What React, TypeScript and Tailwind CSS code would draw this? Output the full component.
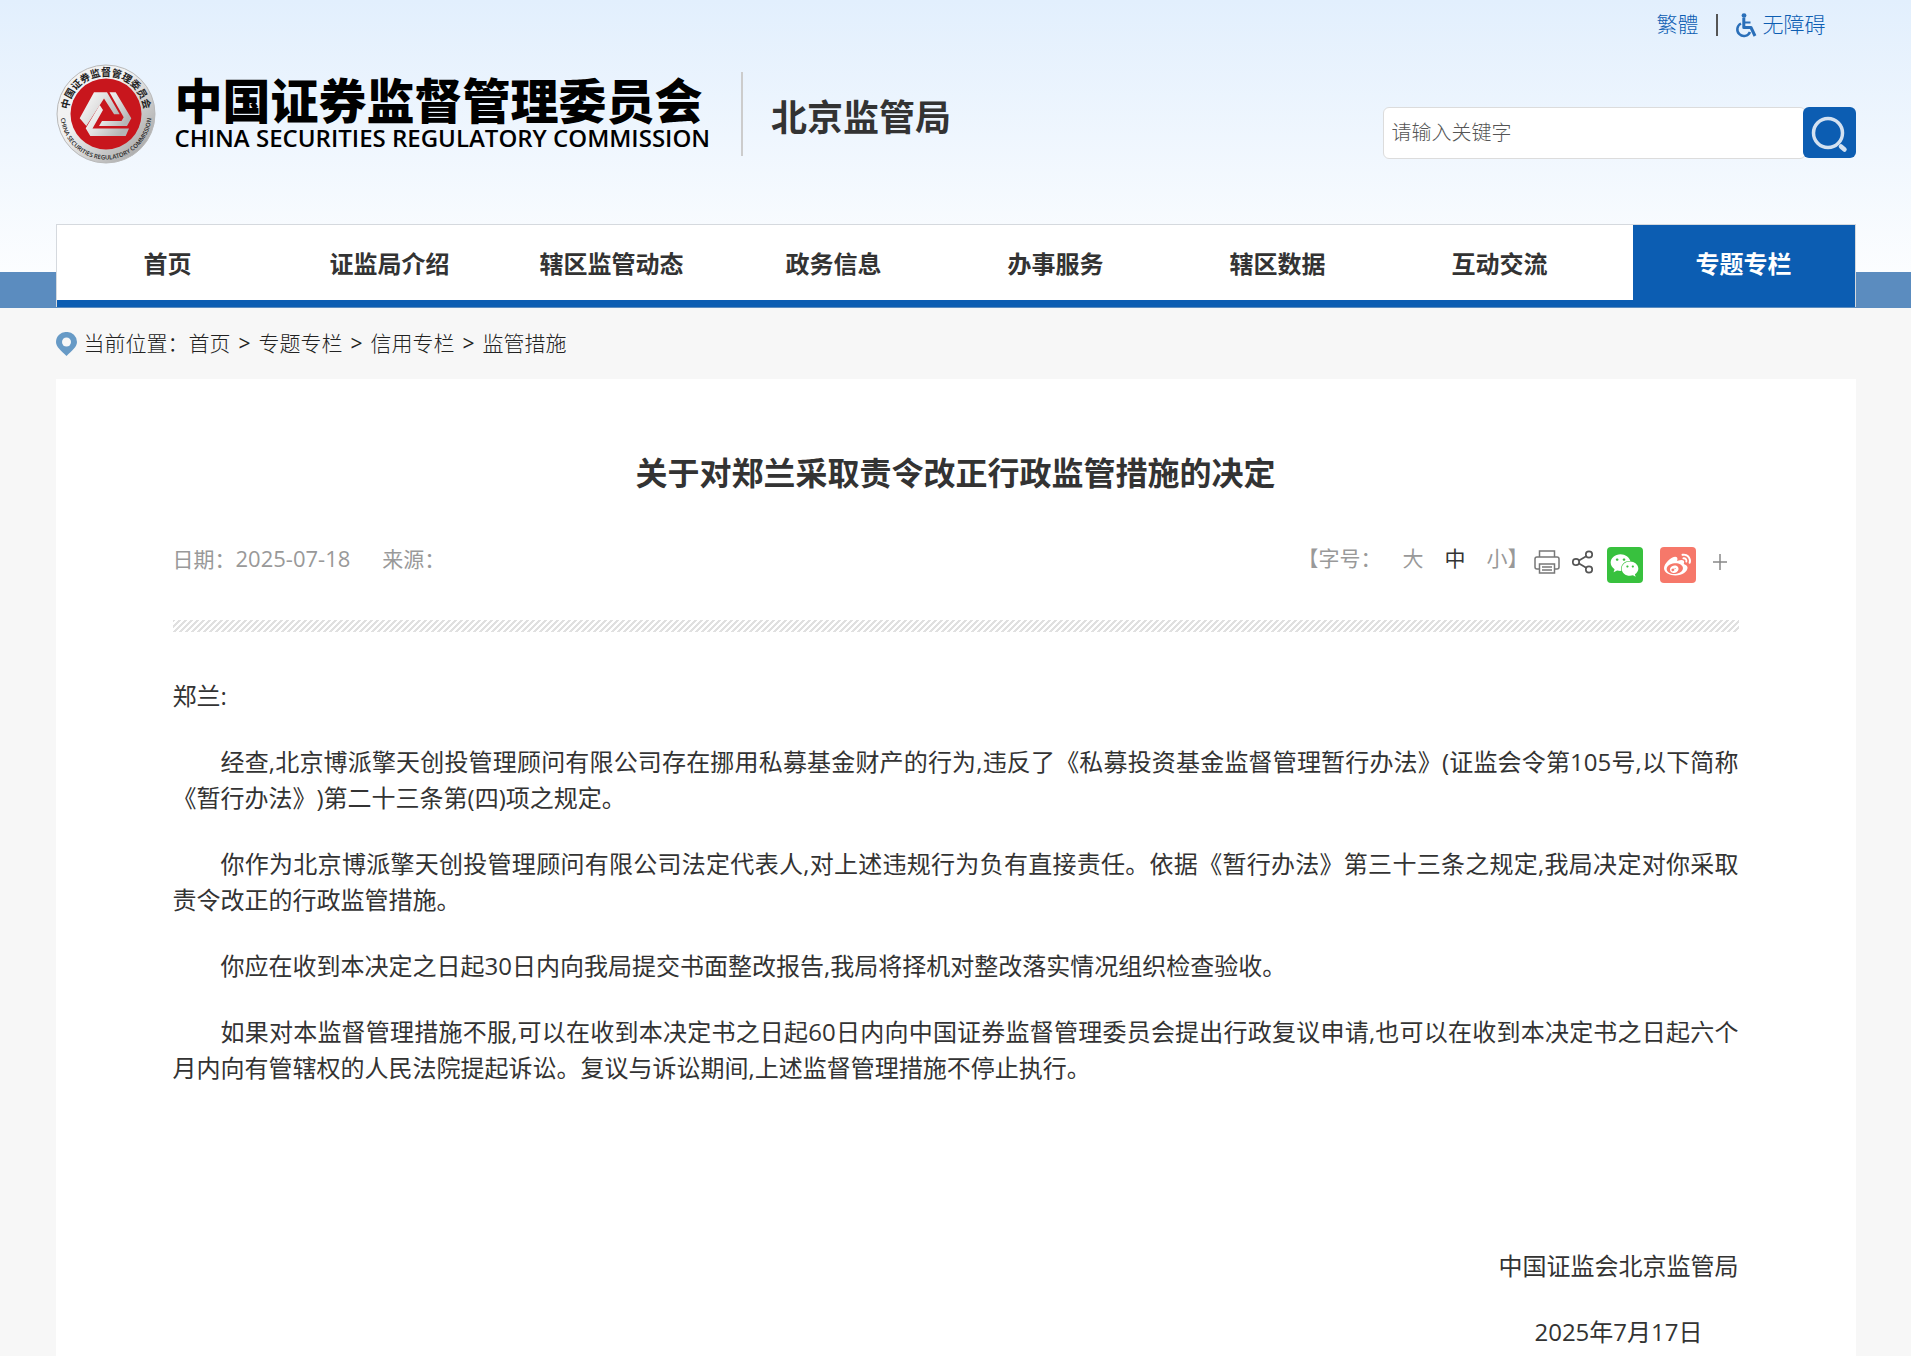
import { FormEvent, useState } from 'react';
import { FaWeibo, FaWeixin } from 'react-icons/fa';

interface INavItem {
  label: string;
  active?: boolean;
}

const navItems: INavItem[] = [
  { label: '首页' },
  { label: '证监局介绍' },
  { label: '辖区监管动态' },
  { label: '政务信息' },
  { label: '办事服务' },
  { label: '辖区数据' },
  { label: '互动交流' },
  { label: '专题专栏', active: true },
];

const crumbs = ['首页', '专题专栏', '信用专栏', '监管措施'];

const paragraphs = [
  '经查,北京博派擎天创投管理顾问有限公司存在挪用私募基金财产的行为,违反了《私募投资基金监督管理暂行办法》(证监会令第105号,以下简称《暂行办法》)第二十三条第(四)项之规定。',
  '你作为北京博派擎天创投管理顾问有限公司法定代表人,对上述违规行为负有直接责任。依据《暂行办法》第三十三条之规定,我局决定对你采取责令改正的行政监管措施。',
  '你应在收到本决定之日起30日内向我局提交书面整改报告,我局将择机对整改落实情况组织检查验收。',
  '如果对本监督管理措施不服,可以在收到本决定书之日起60日内向中国证券监督管理委员会提出行政复议申请,也可以在收到本决定书之日起六个月内向有管辖权的人民法院提起诉讼。复议与诉讼期间,上述监督管理措施不停止执行。',
];

const fontSizes = ['大', '中', '小'];

const Emblem = () => (
  <svg width="100" height="100" viewBox="0 0 100 100" aria-hidden="true">
    <defs>
      <linearGradient id="ring" x1="0" y1="0" x2="1" y2="1">
        <stop offset="0" stopColor="#f4f4f4" />
        <stop offset="0.4" stopColor="#f1f1f1" />
        <stop offset="0.75" stopColor="#bdbdbd" />
        <stop offset="1" stopColor="#9a9a9a" />
      </linearGradient>
      <linearGradient id="knot" x1="0" y1="0" x2="1" y2="0.6">
        <stop offset="0" stopColor="#ffffff" />
        <stop offset="0.5" stopColor="#e2e2e2" />
        <stop offset="1" stopColor="#b5b5b5" />
      </linearGradient>
      <path id="arcTop" d="M12 50a38 38 0 0 1 76 0" />
      <path id="arcBottom" d="M4.500 50a45.500 45.500 0 0 0 91 0" />
    </defs>
    <circle cx="50" cy="50" r="49" fill="url(#ring)" stroke="#b9b9b9" />
    <circle cx="50" cy="50" r="35.500" fill="#c8161d" />
    <g fill="url(#knot)">
      <path d="M23.700 54.300L38 28.300h13l12.700 22h-5.600L48 34.500 30.300 62z" />
      <path d="M53.500 28.300h6.200l15.600 26L71 62H43l3-5h19.500l2.200-3.700z" />
      <path d="M69.700 72H34.300l-4.600-7.700L43.700 41l3.300 5-10.500 18.500H73z" />
    </g>
    <text
      fontSize="10"
      fontWeight="700"
      fill="#222"
      textAnchor="middle"
      className="font-['Noto_Sans_CJK_SC',sans-serif]"
    >
      <textPath href="#arcTop" startOffset="50%">
        中国证券监督管理委员会
      </textPath>
    </text>
    <text
      fontSize="6"
      fontWeight="600"
      fill="#222"
      textAnchor="middle"
      className="font-['Open_Sans',sans-serif]"
    >
      <textPath href="#arcBottom" startOffset="50%">
        CHINA SECURITIES REGULATORY COMMISSION
      </textPath>
    </text>
  </svg>
);

const WheelchairIcon = () => (
  <svg width="22" height="25" viewBox="0 0 22 25" fill="none" stroke="#2a6fb9" aria-hidden="true">
    <circle cx="9" cy="2.6" r="2.4" fill="#2a6fb9" stroke="none" />
    <path d="M8.800 5v9.500h7.200l4 8.500" strokeWidth="3" strokeLinejoin="round" />
    <path d="M9.500 9.500h6" strokeWidth="2" />
    <path d="M6 10.500a6.600 6.600 0 1 0 9 8.500" strokeWidth="2.5" />
  </svg>
);

const SearchIcon = () => (
  <svg width="37" height="37" viewBox="0 0 37 37" fill="none" stroke="#d3e1f1" aria-hidden="true">
    <circle cx="17" cy="17" r="14.5" strokeWidth="3.5" />
    <path d="M30 30.500l3.500 3" strokeWidth="4.5" strokeLinecap="round" />
  </svg>
);

const PinIcon = () => (
  <svg width="21" height="24" viewBox="0 0 21 24" aria-hidden="true">
    <path
      d="M10.5 0a10 10 0 0 1 10.5 10c0 5-5 8.500-10.500 14C5 18.500 0 15 0 10A10 10 0 0 1 10.5 0z"
      fill="#679ac6"
    />
    <circle cx="10.5" cy="10" r="4.5" fill="#f7f7f7" />
  </svg>
);

const PrintIcon = () => (
  <svg width="26" height="24" viewBox="0 0 26 24" fill="none" stroke="#777" strokeWidth="1.5" aria-hidden="true">
    <path d="M5.500 7V1h15v6" />
    <path d="M5.500 19H3a2 2 0 0 1-2-2V9a2 2 0 0 1 2-2h20a2 2 0 0 1 2 2v8a2 2 0 0 1-2 2h-2.500" />
    <path d="M5.500 14h15v9h-15z" />
    <path d="M8 17h10M8 20h10" />
  </svg>
);

const ShareIcon = () => (
  <svg width="21" height="24" viewBox="0 0 21 24" fill="none" stroke="#555" strokeWidth="1.7" aria-hidden="true">
    <circle cx="4" cy="12" r="3.2" />
    <circle cx="17" cy="4.5" r="3.2" />
    <circle cx="17" cy="19.5" r="3.2" />
    <path d="M7 10.500l7.200-4.300M7 13.500l7.200 4.300" />
  </svg>
);

const Header = () => {
  const [keyword, setKeyword] = useState<string>('');

  const handleSearch = (e: FormEvent<HTMLFormElement>) => {
    e.preventDefault();
  };

  return (
    <header className="bg-linear-to-b from-[#e2effd] to-white">
      <div className="mx-auto max-w-[1800px]">
        <div className="flex h-[50px] items-center justify-end pr-[30px] text-[21px] font-light text-[#0c5db2]">
          <a href="#">繁體</a>
          <span className="mx-[17px] h-[22px] w-[2px] bg-[#555]" />
          <a href="#" className="flex items-center gap-[6px]">
            <WheelchairIcon />
            无障碍
          </a>
        </div>
        <div className="flex h-[174px] items-start justify-between">
          <div className="flex items-center pt-[14px]">
            <a href="#" className="flex items-center gap-[19px] text-black">
              <Emblem />
              <span className="flex flex-col">
                <span className="text-[48px] leading-[48px] font-black">中国证券监督管理委员会</span>
                <span className="text-[24px] leading-[26px] font-semibold">
                  CHINA SECURITIES REGULATORY COMMISSION
                </span>
              </span>
            </a>
            <span className="mr-[28px] ml-[31px] h-[84px] w-[2px] bg-[#ccc]" />
            <span className="pt-[8px] text-[36px] font-bold">北京监管局</span>
          </div>
          <form onSubmit={handleSearch} className="flex pt-[57px]">
            <input
              type="text"
              aria-label="请输入关键字"
              value={keyword}
              onChange={(e) => setKeyword(e.target.value)}
              placeholder="请输入关键字"
              className="-mr-[3px] h-[52px] w-[423px] rounded-[6px] border border-[#dcdcdc] bg-white px-[8px] pb-[2px] text-[20px] font-light outline-none placeholder:text-[#555]"
            />
            <button
              type="submit"
              aria-label="搜索"
              className="relative flex h-[51px] w-[53px] items-center justify-center rounded-[6px] bg-[#0c5db2] pt-[4px]"
            >
              <SearchIcon />
            </button>
          </form>
        </div>
      </div>
      {/* nav */}
      <div className="bg-[linear-gradient(to_bottom,transparent_48px,#5b8cbf_48px)] pb-px">
        <nav className="mx-auto flex h-[83px] max-w-[1800px] border-x border-t border-[#d5d9de] bg-white text-[24px] font-bold">
          <ul className="flex flex-1 border-b-[7px] border-[#0c5db2]">
            {navItems.map((item) => (
              <li
                key={item.label}
                className={
                  item.active
                    ? 'ml-auto -mb-[7px] w-[222px] bg-[#0c5db2] text-white'
                    : 'w-[222px]'
                }
              >
                <a href="#" className="flex h-[78px] items-center justify-center">
                  {item.label}
                </a>
              </li>
            ))}
          </ul>
        </nav>
      </div>
      {/* nav */}
    </header>
  );
};

const Breadcrumb = () => (
  <nav className="flex h-[71px] items-center text-[21px] font-light text-[#222]">
    <PinIcon />
    <span className="ml-[7px]">当前位置：</span>
    {crumbs.map((crumb, index) => (
      <span key={crumb}>
        {index > 0 && <span className="mx-[8px] font-normal">&gt;</span>}
        <a href="#">{crumb}</a>
      </span>
    ))}
  </nav>
);

const ArticleMeta = () => {
  const [size, setSize] = useState<string>('中');

  return (
    <div className="flex justify-between text-[21px] leading-[30px] text-[#999]">
      <p>
        日期：<span className="text-[22px]">2025-07-18</span>
        <span className="ml-[32px]">来源：</span>
      </p>
      <div className="flex items-start">
        <span className="mr-[21px]">【字号：</span>
        <div className="flex gap-[21px]">
          {fontSizes.map((item) => (
            <button
              key={item}
              type="button"
              onClick={() => setSize(item)}
              className={item === size ? 'text-[#333]' : ''}
            >
              {item}
            </button>
          ))}
        </div>
        <span className="mr-[5px]">】</span>
        <div className="flex items-start pt-[4px]">
          <button type="button" aria-label="打印" className="mr-[12px] flex h-[30px] items-center">
            <PrintIcon />
          </button>
          <button type="button" aria-label="分享" className="mr-[14px] flex h-[30px] items-center">
            <ShareIcon />
          </button>
          <button
            type="button"
            aria-label="微信"
            className="mr-[17px] flex h-[36px] w-[36px] items-center justify-center rounded-[4px] bg-[#38c13e] text-white"
          >
            <FaWeixin size={29} />
          </button>
          <button
            type="button"
            aria-label="微博"
            className="mr-[17px] flex h-[36px] w-[36px] items-center justify-center rounded-[4px] bg-[#f6786a] text-white"
          >
            <FaWeibo size={27} />
          </button>
          <button type="button" aria-label="更多" className="mr-[12px] flex h-[30px] items-center">
            <svg width="14" height="18" viewBox="0 0 14 18" stroke="#888" strokeWidth="1.5">
              <path d="M0 9h14M7 1v16" />
            </svg>
          </button>
        </div>
      </div>
    </div>
  );
};

const App = () => {
  return (
    <div
      className="min-h-screen bg-[#f7f7f7] font-['Open_Sans','Noto_Sans_CJK_SC',sans-serif] text-[#333] [text-spacing-trim:space-all]"
      lang="zh-CN"
    >
      <Header />
      <main className="mx-auto max-w-[1800px]">
        <Breadcrumb />
        <article className="bg-white px-[117px] pt-[70px] pb-[30px]">
          <h1 className="mb-[46px] text-center text-[32px] leading-[48px] font-bold">
            关于对郑兰采取责令改正行政监管措施的决定
          </h1>
          <ArticleMeta />
          <div className="mt-[37px] mb-[46px] h-[12px] bg-[linear-gradient(135deg,#e0e0e0_0_25%,#fff_25%_50%,#e0e0e0_50%_75%,#fff_75%)] bg-size-[6px_6px]" />
          <div className="flex flex-col gap-[30px] text-justify text-[24px] leading-[36px]">
            <p>郑兰:</p>
            {paragraphs.map((text, index) => (
              <p key={index} className="indent-[48px]">
                {text}
              </p>
            ))}
            <div className="mt-[132px] flex flex-col gap-[30px] text-right">
              <p>中国证监会北京监管局</p>
              <p className="pr-[36px]">2025年7月17日</p>
            </div>
          </div>
        </article>
      </main>
    </div>
  );
};

export default App;
